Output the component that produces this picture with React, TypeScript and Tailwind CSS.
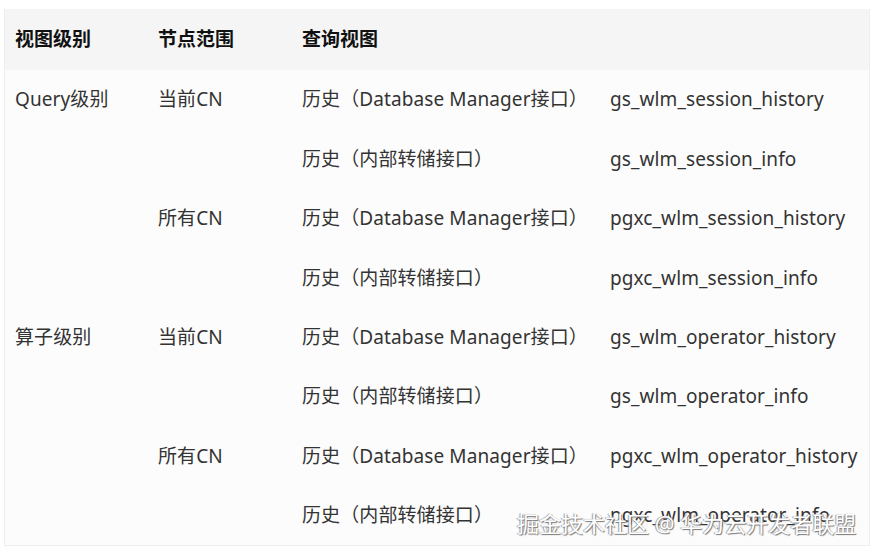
import React from "react";

const rows: [string, string, string, string][] = [
  ["Query级别", "当前CN", "历史（Database Manager接口）", "gs_wlm_session_history"],
  ["", "", "历史（内部转储接口）", "gs_wlm_session_info"],
  ["", "所有CN", "历史（Database Manager接口）", "pgxc_wlm_session_history"],
  ["", "", "历史（内部转储接口）", "pgxc_wlm_session_info"],
  ["算子级别", "当前CN", "历史（Database Manager接口）", "gs_wlm_operator_history"],
  ["", "", "历史（内部转储接口）", "gs_wlm_operator_info"],
  ["", "所有CN", "历史（Database Manager接口）", "pgxc_wlm_operator_history"],
  ["", "", "历史（内部转储接口）", "pgxc_wlm_operator_info"],
];

export default function App() {
  return (
    <div
      className="relative w-[875px] h-[555px] bg-white overflow-hidden pt-[9px] pl-[4px]"
      style={{ fontFamily: '"Noto Sans", "Noto Sans CJK SC", sans-serif' }}
    >
      <div className="w-[866px] border-x border-b border-[#eeeeee] bg-[#fcfcfc]">
        <div className="flex h-[61px] items-center bg-[#f5f5f5] text-[19px] font-bold text-[#111]">
          <div className="w-[143px] pl-[10px]">视图级别</div>
          <div className="w-[144px] pl-[10px]">节点范围</div>
          <div className="w-[308px] pl-[10px]">查询视图</div>
          <div className="flex-1 pl-[10px]"></div>
        </div>
        {rows.map((r, i) => (
          <div key={i} className="flex h-[59.4px] items-center text-[19px] text-[#333] tracking-[0.1px]">
            <div className="w-[143px] pl-[10px] whitespace-nowrap">{r[0]}</div>
            <div className="w-[144px] pl-[10px] whitespace-nowrap">{r[1]}</div>
            <div className="w-[308px] pl-[10px] whitespace-nowrap">{r[2]}</div>
            <div className="flex-1 pl-[10px] whitespace-nowrap">{r[3]}</div>
          </div>
        ))}
      </div>
      <div
        className="absolute left-[517px] top-[507px] text-[22px] text-white whitespace-nowrap"
        style={{ textShadow: "1px 1px 1px #777, -1px 0 1px #999" }}
      >
        掘金技术社区 @ 华为云开发者联盟
      </div>
    </div>
  );
}
